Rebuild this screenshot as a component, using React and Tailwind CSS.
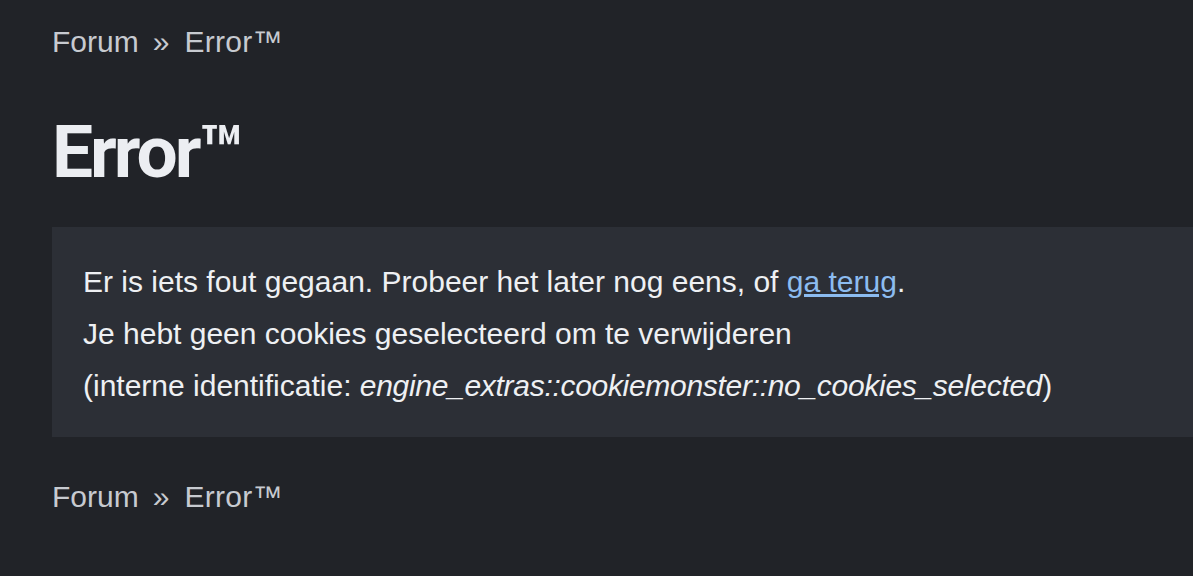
function Crumbs({ className }) {
  return (
    <div className={"flex items-center text-[30px] leading-[36px] text-[#c7cad0] " + className}>
      <span>Forum</span>
      <span className="ml-[14px] mr-[15px]">»</span>
      <span className="tracking-[0.3px]">Error™</span>
    </div>
  );
}

export default function App() {
  return (
    <div className="w-[1193px] h-[576px] overflow-hidden bg-[#212328] text-[#e6e8ec]" style={{ fontFamily: '"Liberation Sans", Arial, sans-serif' }}>
      <div className="pl-[52px] pt-[24px]">
        <Crumbs className="" />
        <h1 className="mt-[52px] text-[73px] leading-[80px] font-bold text-[#eceef2] tracking-[-3px]" style={{ fontFamily: 'Roboto, sans-serif' }}>Error™</h1>
        <div className="mt-[35px] bg-[#2c2f36] pl-[31px] pt-[29px] pb-[25px] text-[30px] leading-[52px] text-[#eef0f3]">
          <p>Er is iets fout gegaan. Probeer het later nog eens, of <a href="#" className="text-[#8cbcf0] underline">ga terug</a>.</p>
          <p>Je hebt geen cookies geselecteerd om te verwijderen</p>
          <p>(interne identificatie: <i className="tracking-[-0.3px]">engine_extras::cookiemonster::no_cookies_selected</i>)</p>
        </div>
        <Crumbs className="mt-[42px]" />
      </div>
    </div>
  );
}
